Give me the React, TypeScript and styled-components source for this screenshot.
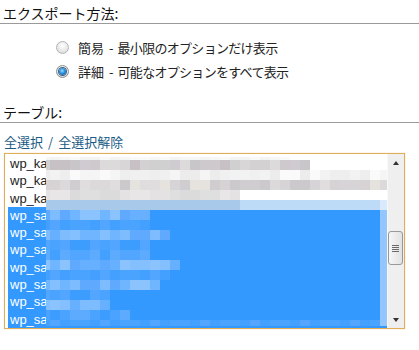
import styled, { createGlobalStyle } from 'styled-components';

const GlobalStyle = createGlobalStyle`
  html, body {
    margin: 0;
    padding: 0;
    background: #fff;
  }
  body {
    font-family: "Noto Sans CJK JP", "Liberation Sans", sans-serif;
    color: #222;
  }
`;

const Page = styled.div`
  width: 419px;
  height: 350px;
  overflow: hidden;
`;

const Heading = styled.h3<{ $top: number }>`
  margin: ${({ $top }) => $top}px 0 0 0;
  padding: 0 0 1px 3px;
  font-size: 14px;
  line-height: 18px;
  font-weight: normal;
  color: #111;
  border-bottom: 1px solid #9a9a9a;
`;

const RadioList = styled.div`
  display: flex;
  flex-direction: column;
  margin: 11px 0 0 56px;
`;

const RadioRow = styled.label`
  display: flex;
  align-items: center;
  gap: 9px;
  height: 24px;
  font-size: 13px;
  color: #222;
`;

const RadioDot = styled.span<{ $checked: boolean }>`
  width: 13px;
  height: 13px;
  box-sizing: border-box;
  border-radius: 50%;
  border: 1px solid ${({ $checked }) => ($checked ? '#8d8d8d' : '#b4b4b4')};
  background: radial-gradient(circle at 50% 35%, #ffffff 0%, #e6e6e6 60%, #d0d0d0 100%);
  display: flex;
  align-items: center;
  justify-content: center;

  &::after {
    content: '';
    display: ${({ $checked }) => ($checked ? 'block' : 'none')};
    width: 7px;
    height: 7px;
    border-radius: 50%;
    background: radial-gradient(circle at 45% 40%, #9fe0ff 0%, #2a8fe0 45%, #0b4f99 100%);
    box-shadow: 0 0 0 1px #3f5f80;
  }
`;

const Label = styled.span`
  display: flex;
  align-items: center;
`;

const Term = styled.span``;

const Dash = styled.span`
  margin: 0 4px 0 5px;
`;

const Desc = styled.span`
  letter-spacing: -0.7px;
`;

const LinkRow = styled.div`
  margin: 10px 0 0 4px;
  font-size: 13px;
  line-height: 18px;
`;

const Link = styled.a`
  color: #1a5b85;
  text-decoration: none;
  cursor: pointer;
`;

const Slash = styled.span`
  margin: 0 5px;
  color: #1a5b85;
`;

const ListBox = styled.div`
  position: relative;
  display: flex;
  box-sizing: border-box;
  width: 401px;
  height: 176px;
  margin: 2px 0 0 4px;
  border: 1px solid #e0ad58;
  box-shadow: 0 0 1px rgba(224, 173, 88, 0.6);
  background: #fff;
`;

const Options = styled.div`
  flex: 1;
  overflow: hidden;
  padding: 1px 0 0 3px;
`;

const Option = styled.div<{ $selected: boolean }>`
  height: 17.3px;
  line-height: 17px;
  padding-left: 2px;
  font-family: "Liberation Sans", Arial, sans-serif;
  font-size: 13px;
  white-space: nowrap;
  color: ${({ $selected }) => ($selected ? '#fff' : '#222')};
  background: ${({ $selected }) => ($selected ? '#3399ff' : 'transparent')};
`;

const Scrollbar = styled.div`
  width: 17px;
  display: flex;
  flex-direction: column;
  background: #efefef;
  border-left: 1px solid #f8f8f8;
  box-sizing: border-box;
`;

const Arrow = styled.div<{ $dir: 'up' | 'down' }>`
  height: 17px;
  display: flex;
  align-items: center;
  justify-content: center;

  &::after {
    content: '';
    border-left: 3.5px solid transparent;
    border-right: 3.5px solid transparent;
    ${({ $dir }) => ($dir === 'up' ? 'border-bottom: 4px solid #333;' : 'border-top: 4px solid #333;')}
  }
`;

const Track = styled.div`
  flex: 1;
  padding-top: 60px;
`;

const Thumb = styled.div`
  height: 34px;
  margin: 0 1px 0 0;
  box-sizing: border-box;
  border: 1px solid #999;
  border-radius: 3px;
  background: linear-gradient(to right, #f6f6f6, #e2e2e2);
  display: flex;
  flex-direction: column;
  align-items: center;
  justify-content: center;
  gap: 1px;
`;

const Grip = styled.span`
  width: 7px;
  height: 1px;
  background: #6a6a6a;
`;

const Mosaic = styled.svg`
  position: absolute;
  left: 0;
  top: 0;
  pointer-events: none;
`;

const palettes: Record<string, string[]> = {
  top: ['#f6f6f6', '#f9f9f9', '#f3f3f3'],
  gray: ['#cdc9cd', '#d4d1d3', '#c9c6ca', '#d8d6d6', '#cfcbd0', '#c7c1c6', '#dcdada', '#d1d0d0'],
  faint: ['#f1f0f1', '#f5f5f5', '#eeeeee', '#fafafa', '#f2f2f2', '#ececec'],
  gray2: ['#d7d3d5', '#d0cdd0', '#dcd9da', '#ccc9cd', '#e0ddde', '#d6d4d6', '#e6e2dd'],
  pale: ['#e5e2e4', '#e0dfdf', '#e8e6e6', '#dcdbdc'],
  light: ['#6fb5ff', '#7cbcff', '#84c0ff', '#66b0ff', '#8bc3ff', '#5fa9ff'],
  medium: ['#4aa3ff', '#52a6ff', '#44a0ff', '#5cabff', '#3d9dff'],
};

const mosaicRows = [
  { y: 157, h: 3, end: 290, tone: 'top' },
  { y: 160, h: 10, end: 310, tone: 'gray' },
  { y: 170, h: 10, end: 387, tone: 'faint' },
  { y: 180, h: 10, end: 387, tone: 'gray2' },
  { y: 190, h: 10, end: 240, tone: 'pale' },
  { y: 210, h: 10, end: 150, tone: 'light' },
  { y: 220, h: 10, end: 150, tone: 'medium' },
  { y: 230, h: 10, end: 170, tone: 'light' },
  { y: 240, h: 10, end: 150, tone: 'medium' },
  { y: 250, h: 10, end: 150, tone: 'medium' },
  { y: 260, h: 10, end: 180, tone: 'light' },
  { y: 270, h: 10, end: 170, tone: 'medium' },
  { y: 280, h: 10, end: 160, tone: 'light' },
  { y: 290, h: 10, end: 110, tone: 'medium' },
  { y: 300, h: 10, end: 110, tone: 'light' },
  { y: 310, h: 10, end: 130, tone: 'medium' },
  { y: 320, h: 6, end: 380, tone: 'medium' },
];

const cellEdges = (end: number) => {
  const edges = [46];
  for (let x = 50; x < end; x += 10) edges.push(x);
  edges.push(end);
  return edges;
};

const MosaicLayer = () => (
  <Mosaic width={382} height={173} viewBox="5 154 382 173" shapeRendering="crispEdges">
    {mosaicRows.map((row, r) => {
      const edges = cellEdges(row.end);
      const pal = palettes[row.tone];
      return edges.slice(0, -1).map((x, c) => (
        <rect
          key={`${r}-${c}`}
          x={x}
          y={row.y}
          width={edges[c + 1] - x}
          height={row.h}
          fill={pal[(r * 7 + c * 13 + ((c * c) % 5)) % pal.length]}
        />
      ));
    })}
    <rect x={46} y={200} width={194} height={10} fill="#a9c9ea" />
    <rect x={240} y={200} width={140} height={10} fill="#bddbf7" />
    <rect x={380} y={200} width={7} height={10} fill="#d8eafc" />
    <rect x={380} y={210} width={7} height={116} fill="#92c6fd" />
  </Mosaic>
);

const rows = [
  { name: 'wp_ka', selected: false },
  { name: 'wp_ka', selected: false },
  { name: 'wp_ka', selected: false },
  { name: 'wp_sa', selected: true },
  { name: 'wp_sa', selected: true },
  { name: 'wp_sa', selected: true },
  { name: 'wp_sa', selected: true },
  { name: 'wp_sa', selected: true },
  { name: 'wp_sa', selected: true },
  { name: 'wp_sa', selected: true },
];

export default function App() {
  return (
    <Page>
      <GlobalStyle />
      <Heading $top={4}>エクスポート方法:</Heading>
      <RadioList>
        <RadioRow>
          <RadioDot $checked={false} />
          <Label>
            <Term>簡易</Term>
            <Dash>-</Dash>
            <Desc>最小限のオプションだけ表示</Desc>
          </Label>
        </RadioRow>
        <RadioRow>
          <RadioDot $checked />
          <Label>
            <Term>詳細</Term>
            <Dash>-</Dash>
            <Desc>可能なオプションをすべて表示</Desc>
          </Label>
        </RadioRow>
      </RadioList>

      <Heading $top={20}>テーブル:</Heading>
      <LinkRow>
        <Link>全選択</Link>
        <Slash>/</Slash>
        <Link>全選択解除</Link>
      </LinkRow>

      <ListBox>
        <Options>
          {rows.map((row, i) => (
            <Option key={i} $selected={row.selected}>
              {row.name}
            </Option>
          ))}
        </Options>
        <Scrollbar>
          <Arrow $dir="up" />
          <Track>
            <Thumb>
              <Grip />
              <Grip />
              <Grip />
              <Grip />
            </Thumb>
          </Track>
          <Arrow $dir="down" />
        </Scrollbar>
        <MosaicLayer />
      </ListBox>
    </Page>
  );
}
